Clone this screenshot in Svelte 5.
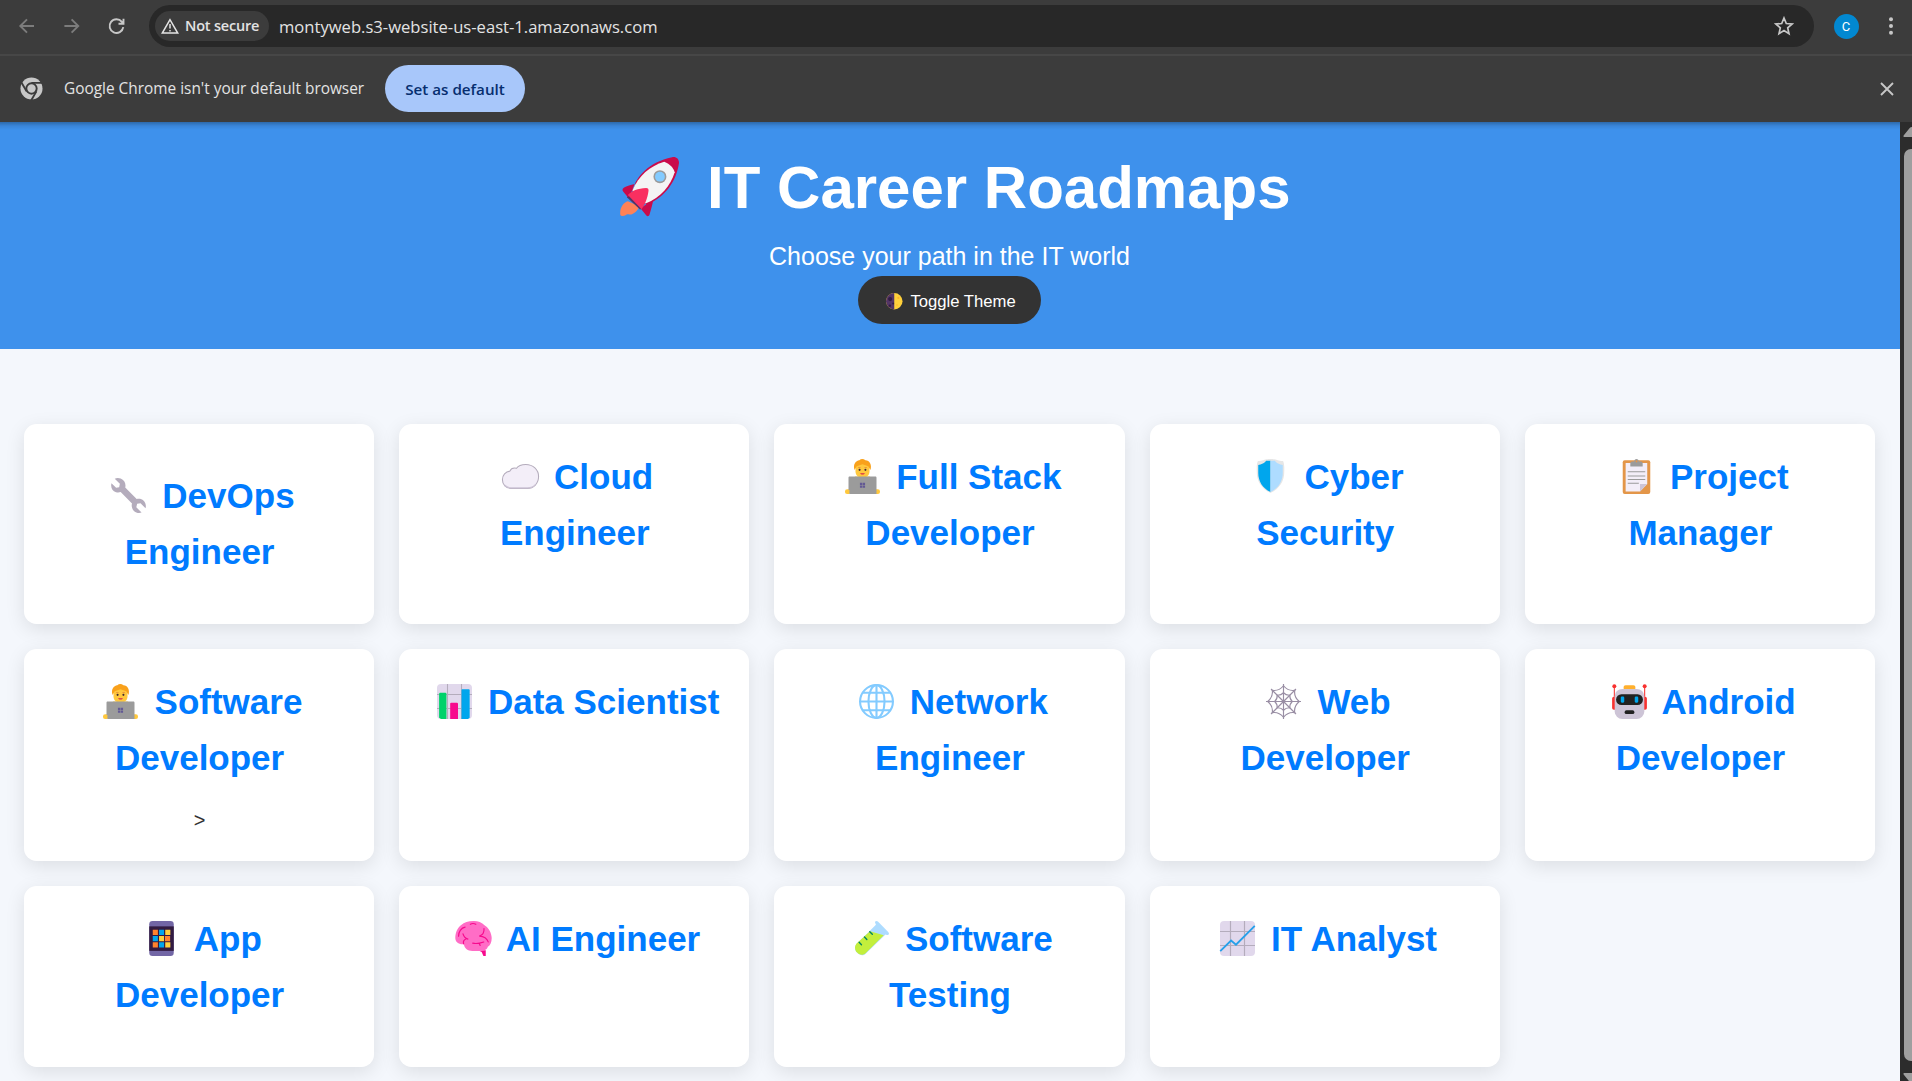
<script>
  const cards = [
    { icon: 'wrench', title: 'DevOps Engineer', offset: true },
    { icon: 'cloud', title: 'Cloud Engineer' },
    { icon: 'coder', title: 'Full Stack Developer' },
    { icon: 'shield', title: 'Cyber Security' },
    { icon: 'clipboard', title: 'Project Manager' },
    { icon: 'coder', title: 'Software Developer', note: '>' },
    { icon: 'bars', title: 'Data Scientist' },
    { icon: 'globe', title: 'Network Engineer' },
    { icon: 'web', title: 'Web Developer' },
    { icon: 'robot', title: 'Android Developer' },
    { icon: 'phone', title: 'App Developer' },
    { icon: 'brain', title: 'AI Engineer' },
    { icon: 'tube', title: 'Software Testing' },
    { icon: 'chart', title: 'IT Analyst' }
  ];
</script>

{#snippet glyph(name)}
  <svg class="glyph" viewBox="0 0 30 30">
    {#if name === 'wrench'}
      <path fill="#b4acbc" d="M3.2.6 7.6 5 7 8 4.4 8.3.4 4.4C-.5 7.800 1 11.200 4.300 12.200c1.300.4 2.800.3 4-.1L18 21.800c-.9 3.200.7 6.500 3.700 7.700 1.500.6 3.100.6 4.500.1l-4.500-4.500.7-3 2.900-.5 4.300 4.300c1-3.400-.7-6.800-4-7.900-1.200-.4-2.500-.3-3.600 0L12.200 8.100C13 5 11.500 1.800 8.300.5 6.600-.1 4.800-.1 3.200.6Z" />
    {:else if name === 'cloud'}
      <path fill="#f3eef8" stroke="#b4acbc" stroke-width=".9" d="M7 25.200C2.500 25.200-.5 21.900-.5 17.700c0-4 2.700-6.900 6.400-7.300C6.800 8.300 9 7.400 11.600 8 13.200 5.600 16 4.700 19.500 4.700c6.200 0 11 4.500 11 10.300 0 5.900-4.300 10.200-9.500 10.200Z" />
      <path fill="none" stroke="#cdc4d6" stroke-width="1" d="M1.500 22.500c1.500 1.600 3.400 2.200 5.500 2.200h14c3 0 5.500-1.200 7-3" />
    {:else if name === 'coder'}
      <path fill="#ffc83d" d="M8.500 16v-1h13v1Z" />
      <path fill="#ffc83d" d="M9 7.500C9 4.500 11.500 3 15 3s6 1.500 6 4.500v3.200c0 3.300-2.500 5.300-6 5.300s-6-2-6-5.300Z" />
      <path fill="#f9a11b" d="M8.200 9.500C6.600 4.500 9.200 1.300 12.300 1c1.400-1.300 3.500-1.300 5.200 0 3.600.1 5.800 4 4.300 8.500L20 6.200l-5-1.600-5 1.600Z" />
      <circle cx="12.500" cy="9.300" r=".9" fill="#402a32" /><circle cx="17.500" cy="9.300" r=".9" fill="#402a32" />
      <path fill="none" stroke="#e5883b" stroke-width=".7" d="M11.300 7.300h2M16.700 7.300h2" />
      <path fill="#d6244c" d="M13 12.200h4c-.3 1.500-3.700 1.500-4 0Z" />
      <rect x="0" y="26" width="5" height="4" rx="1.800" fill="#ffc83d" />
      <rect x="25" y="26" width="5" height="4" rx="1.800" fill="#ffc83d" />
      <path fill="#9b9b9b" d="M3 16c0-.6.400-1 1-1h22c.6 0 1 .4 1 1v14H3.800V26.500H3Z" />
      <path fill="#635994" d="M12.800 20.300h2v2h-2zM15.200 20.300h2v2h-2zM12.800 22.700h2v2h-2zM15.200 22.700h2v2h-2z" />
    {:else if name === 'shield'}
      <path fill="#e6e6e6" d="M15 0c1.300 0 2 .1 3.300.2 2 .2 3.500 1.400 7.300 1.500.700 0 1.200 4.300 1.200 5V11c0 8-4 14.500-11.800 18.200C7.200 25.500 3.200 19 3.200 11V6.700c0-.7.500-5 1.200-5C8.200 1.600 9.700.4 11.700.2 13 .1 13.700 0 15 0Z" />
      <path fill="#00a6ed" d="M15 1.500h-3.800C10.300 3.600 7 4.500 4.500 5.200V12c0 7 3.600 13 10.500 16.300Z" />
      <path fill="#aedcff" d="M15 1.500h3.800c.9 2.100 4.200 3 6.700 3.700V12c0 7-3.600 13-10.500 16.300Z" />
    {:else if name === 'clipboard'}
      <rect x="3.200" y="1" width="23.600" height="29" rx="1.700" fill="#e39649" />
      <path fill="#f3eef8" d="M5.700 3.500h18.500v18L18 27.900H5.700Z" />
      <path fill="#cdc4d6" d="M18 21.500h6.200L18 27.900Z" />
      <path fill="#9b9b9b" d="M9.700 6.500V3.800c0-1 .7-1.700 1.700-1.700H13C13.300.6 14 0 15 0s1.700.6 2 2.100h1.600c1 0 1.700.7 1.700 1.700v2.700Z" />
      <circle cx="15" cy="2" r=".9" fill="#e39649" />
      <path stroke="#9b9b9b" stroke-width=".9" d="M7.500 11h15M7.500 14.500h15M7.500 17.500h15M7.500 20.700H17" />
    {:else if name === 'bars'}
      <rect width="30" height="30" rx="3.500" fill="#e1d8ec" />
      <path stroke="#b4acbc" stroke-width=".9" d="M9 0v30M21 0v30M0 9h30M0 21h30" />
      <path fill="#00d26a" d="M1.800 8.500c0-.6.300-.9.900-.9h4.500c.6 0 .9.300.9.900V30H3.500l-1.700-1Z" />
      <path fill="#f70a8d" d="M11.300 17c0-.6.300-.9.900-.9h4.900c.6 0 .9.300.9.900v13h-6.700Z" />
      <path fill="#00a6ed" d="M21 5.500c0-.6.300-1 .9-1h5.200c.6 0 .9.400.9 1V29l-1.500 1H21Z" />
    {:else if name === 'globe'}
      <g fill="none" stroke="#83cbff" stroke-width="1.800">
        <circle cx="15" cy="15" r="14.100" /><ellipse cx="15" cy="15" rx="6.900" ry="14" />
        <path d="M15 1v28M1 15h28M3.300 7.500h23.400M3.300 22.500h23.400" />
      </g>
    {:else if name === 'web'}
      <g fill="none" stroke="#998ea4" stroke-width="1">
        <path d="M15 0v30M0 15h30M4.300 4.300l21.400 21.400M25.700 4.300 4.300 25.700" />
        <path d="M15 1.500q4 4.800 9.700 3.900Q23.700 11 28.500 15q-4.800 4-3.900 9.600Q19 23.700 15 28.500q-4-4.800-9.600-3.900Q6.300 19 1.500 15q4.800-4 3.900-9.600Q11 6.300 15 1.500Z" />
        <path d="M15 7.500q2.200 2.300 5.400 2.100-.2 3.200 2.100 5.400-2.300 2.200-2.100 5.400-3.200-.2-5.400 2.100-2.200-2.300-5.400-2.100.2-3.200-2.100-5.400 2.300-2.200 2.100-5.400 3.200.2 5.400-2.100Z" />
      </g>
    {:else if name === 'robot'}
      <path stroke="#f8312f" stroke-width=".9" d="M2 2v12M28 2v12" />
      <circle cx="2" cy="2" r="1.700" fill="#f8312f" /><circle cx="28" cy="2" r="1.700" fill="#f8312f" />
      <rect x=".1" y="11" width="5" height="11" rx="1.500" fill="#f8312f" /><rect x="24.900" y="11" width="5" height="11" rx="1.500" fill="#f8312f" />
      <path fill="#ffb02e" d="M10 4.500V2.700c0-1 .6-1.600 1.600-1.600h6.800c1 0 1.600.6 1.600 1.600v1.800Z" />
      <rect x="2.300" y="4.200" width="25.400" height="25.800" rx="6.500" fill="#cdc4d6" />
      <rect x="3.500" y="8.700" width="23" height="9.300" rx="4.600" fill="#212121" />
      <rect x="7.500" y="10.800" width="3" height="5.200" rx="1" fill="#00a6ed" /><rect x="19.500" y="10.800" width="3" height="5.200" rx="1" fill="#00a6ed" />
      <rect x="10.800" y="22.500" width="8.400" height="3.300" rx="1.600" fill="#212121" />
    {:else if name === 'phone'}
      <rect x="4.500" y="0" width="21" height="30" rx="2.800" fill="#7266a5" />
      <rect x="4.500" y="4.600" width="21" height="21" fill="#321b41" />
      <path fill="#ff822d" d="M7.500 7.500h4.400V12H7.500zM18 12.900h4.400v4.400H18zM7.500 18.300h4.400v4.500H7.500z" />
      <path fill="#00a6ed" d="M12.900 7.500h4.300V12h-4.300zM7.500 12.900h4.400v4.400H7.500zM12.900 18.300h4.300v4.500h-4.300z" />
      <path fill="#ffd03b" d="M18.200 7.500h4.400V12h-4.400zM12.900 12.900h4.300v4.400h-4.300zM18.200 18.300h4.400v4.500h-4.400z" />
    {:else if name === 'brain'}
      <path fill="#f70a8d" d="m19 25 3 1.500 1.500 3.500h2v-5Z" />
      <path fill="#ff6dc6" d="M5.600 20C2 20-.6 17.800-.6 14.600-.6 10 1.500 5.500 4.500 3.500 7 1 10.500 0 15 0c3.500-.1 7 1 9.700 3.800 3.400 2 5.800 6.700 5.900 10.700 0 3.600-1.300 6.500-3.300 7.600-1 3-3.800 3.600-6.600 3.600H14c-4 0-6.600-2-7.200-5.500Z" />
      <path fill="none" stroke="#f70a8d" stroke-width="1" stroke-linecap="round" d="M12.300 2.800c1.500-.9 3-.9 4.700 0M7.800 5.200C4.500 5.700 2 9.500 2.200 13M6 11c.5 2 1.600 3.500 4.200 4.500M6.500 19.500c-.6-2 .6-3.700 3-4.500M24 6.500c.3 3.500-.9 5.400-4 6.400 4.500.2 6.500 1.700 7.600 5M14.300 19c2.800.6 6 .2 9.500-1M20 19.300l.7 1.700" />
    {:else if name === 'tube'}
      <path fill="#aedcff" d="M18.200 1.800c-.8-1.600 1.200-2.400 2.300-1.300l9 9.200c1.100 1.200.2 2.900-1.300 2.200l-1.200-.3L10 28c-4.600 4.200-12-3-8-8L18.800 3.300Z" />
      <path fill="#c3ef3c" d="m13.700 8.800 11.800 3.400L9.900 27.700C5.400 31.800-2 25 2 19.500Z" />
      <path stroke="#008463" stroke-width="1.200" stroke-linecap="round" d="m4.400 18.300 2 2M9 13.800l2 2M13.500 9.200l2.200 2.200" />
    {:else if name === 'chart'}
      <rect width="30" height="30" rx="3.500" fill="#e1d8ec" />
      <path stroke="#b4acbc" stroke-width="1" d="M9 0v30M21 0v30M0 9h30M0 21h30" />
      <path fill="none" stroke="#26a0ea" stroke-width="1.600" d="m.2 25.800 9.300-9.100 4.200 3.600L29.800 4.200" />
    {:else if name === 'moon'}
      <circle cx="15" cy="15" r="15" fill="#ffd03b" />
      <path fill="#533566" d="M15 0a15 15 0 0 0 0 30Z" />
      <circle cx="7.500" cy="11" r="3.800" fill="#321b41" /><circle cx="7" cy="23" r="2.200" fill="#321b41" /><circle cx="13" cy="19" r="1.800" fill="#321b41" />
      <circle cx="22.500" cy="9" r="2" fill="#ffb02e" /><circle cx="20" cy="22" r="1.400" fill="#ffb02e" />
    {:else if name === 'rocket'}
      <path fill="#ff8257" d="M4 22.500c-2 .5-4 3-3.900 5.900C0 29.500.2 30 1.200 30c1.500 0 2-.8 2.700-.9.700-.1.800.4 1.900.1 1.500-.5 3.500-2.300 4-4.200Z" />
      <path fill="#533566" d="m3.500 20.500 6.800 6.300 1.500-2.600-6.500-6.400Z" />
      <path fill="#ca0b4a" d="M8.300 13.500c-3.700 1-5 1.300-6.500 2.300-.7.400-.6 1.300-.2 1.800l2.500 3ZM17 21.800c-.7 3-1.300 5.400-2 7.600-.3.800-1.100.9-1.700.2l-2.900-3.500ZM6.200 17.200C8.500 9.500 14.500 2.800 26.500.1 28.700-.2 30 1 30 3c-1.300 9-6.700 17.300-16.500 21.300Z" />
      <path fill="#f4f4f4" d="M22.500 2.400c3 1.200 4.600 3 5.300 5.300C25.700 14.500 20.800 20.500 13 23.700L6.300 17C9.500 9.500 15.300 4.500 22.500 2.400Z" />
      <circle cx="20.300" cy="10" r="3.300" fill="#9b9b9b" /><circle cx="20.300" cy="10" r="2.500" fill="#83cbff" />
      <path fill="#f92f60" d="M4 19.300c2-2 5-3.300 9.300-3.500 1 0 1.300.7 1.200 1.400-.5 4.200-2 7.200-3.500 9.400Z" />
    {/if}
  </svg>
{/snippet}

<div class="window">
  <div class="toolbar">
    <svg class="nav dim" viewBox="0 0 20 20"><path d="M17 10H3.500M10 3.300 3.300 10l6.700 6.700" /></svg>
    <svg class="nav dim" viewBox="0 0 20 20"><path d="M2.400 10h13.700M9.600 3.300l6.700 6.700-6.700 6.700" /></svg>
    <svg class="nav" viewBox="0 0 20 20"><path d="M16.300 11.200a6.900 6.900 0 1 1-1.400-5.400l1.500 1.500M16.500 2.800v5h-5" /></svg>
    <div class="omnibox">
      <div class="chip">
        <svg viewBox="0 0 18 16"><path d="M9 1.700 1.300 15h15.400Z" /><path d="M9 6v4.500M9 12v1.500" /></svg>
        <span>Not secure</span>
      </div>
      <span class="url">montyweb.s3-website-us-east-1.amazonaws.com</span>
      <svg class="star" viewBox="0 0 20 20"><path d="m10 2 2.300 5.500 5.800.5-4.400 3.900 1.300 5.800-5-3.100-5 3.100 1.300-5.800L1.900 8l5.800-.5Z" /></svg>
    </div>
    <div class="avatar">C</div>
    <svg class="kebab" viewBox="0 0 6 20"><circle cx="3" cy="3.200" r="2" /><circle cx="3" cy="10" r="2" /><circle cx="3" cy="16.800" r="2" /></svg>
  </div>

  <div class="infobar">
    <svg class="chrome" viewBox="0 0 24 24">
      <circle cx="12" cy="12" r="11.500" fill="#c7c7c7" />
      <path fill="none" stroke="#3c3c3c" stroke-width="2" d="M12 6.100h12M17.100 15l-6 10.400M6.900 15 .9 4.600" />
      <circle cx="12" cy="12" r="5.400" fill="#c7c7c7" stroke="#3c3c3c" stroke-width="2" />
    </svg>
    <span class="message">Google Chrome isn't your default browser</span>
    <button class="default">Set as default</button>
    <svg class="close" viewBox="0 0 14 14"><path d="m1 1 12 12M13 1 1 13" /></svg>
  </div>

  <div class="viewport">
    <div class="page">
      <header>
        <h1><span class="emoji">{@render glyph('rocket')}</span> IT Career Roadmaps</h1>
        <p>Choose your path in the IT world</p>
        <button class="theme"><span class="emoji">{@render glyph('moon')}</span> Toggle Theme</button>
      </header>
      <main>
        {#each cards as card}
          <article class:offset={card.offset}>
            <h2><span class="emoji">{@render glyph(card.icon)}</span> {card.title}</h2>
            {#if card.note}<div>{card.note}</div>{/if}
          </article>
        {/each}
      </main>
    </div>
    <div class="scrollbar">
      <svg viewBox="0 0 13 10"><path d="M1 10h12V0H9Q7.500 0 6.500 1.300L.8 8.300Q0 9.700 1 10Z" /></svg>
      <div class="thumb"></div>
      <svg viewBox="0 0 13 10"><path d="M1 0h12v10H9Q7.500 10 6.500 8.700L.8 1.700Q0 .3 1 0Z" /></svg>
    </div>
  </div>
</div>

<style>
  :global(body) { margin: 0; overflow: hidden; }
  .window {
    width: 1912px; height: 1081px; overflow: hidden;
    display: flex; flex-direction: column;
    font-family: "Open Sans", "Noto Sans", sans-serif;
    background: #3c3c3c;
  }
  .window * { box-sizing: border-box; }
  svg { display: block; flex: none; }
  button { border: 0; margin: 0; }

  .toolbar {
    flex: none; height: 56px; padding: 5px 18px 7px 17px;
    display: flex; align-items: center;
    border-bottom: 2px solid #474747;
    color: #c7c7c7;
  }
  .nav { width: 20px; height: 20px; margin-right: 25px; fill: none; stroke: currentColor; stroke-width: 1.9; }
  .nav.dim { color: #7c7c7c; }
  .omnibox {
    width: 1665px; height: 42px; padding: 0 20px 0 6px; margin-left: -3px;
    display: flex; align-items: center;
    border-radius: 21px; background: #282828;
  }
  .chip {
    width: 114px; height: 30px; padding: 0 0 2px 6px; gap: 6px;
    display: flex; align-items: center;
    border-radius: 15px; background: #3c3c3c; color: #e3e3e3;
    font-size: 14.500px; font-weight: 600; white-space: nowrap; letter-spacing: -.2px;
  }
  .chip svg { width: 18px; height: 16px; margin-top: 2px; fill: none; stroke: currentColor; stroke-width: 1.500; }
  .url { flex: 1; margin-left: 10px; font-size: 16.600px; color: #e3e3e3; white-space: nowrap; }
  .star { width: 20px; height: 20px; fill: none; stroke: #c7c7c7; stroke-width: 1.700; }
  .avatar {
    width: 25px; height: 25px; margin-left: 20px;
    border-radius: 50%; background: #0288d1; color: #fff;
    font: 13px/25px Roboto, sans-serif; text-align: center;
  }
  .kebab { width: 6px; height: 20px; margin-left: 29.500px; fill: #c7c7c7; }

  .infobar { flex: none; height: 66px; padding: 0 18.500px 1px 20px; display: flex; align-items: center; }
  .chrome { width: 23px; height: 23px; }
  .message { width: 321px; margin-left: 21px; font-size: 15.400px; color: #e3e3e3; white-space: nowrap; }
  .default {
    width: 140px; height: 47px; padding: 0; border-radius: 23.500px;
    background: #a8c7fa; color: #062e6f;
    font: 600 15.200px "Open Sans", sans-serif; white-space: nowrap;
  }
  .close { width: 14px; height: 14px; margin-left: auto; fill: none; stroke: #c7c7c7; stroke-width: 1.900; }

  .viewport { flex: 1; min-height: 0; display: flex; }
  .page { width: 1900px; background: #f4f7fc; color: #333; font-family: "Liberation Sans", Arial, sans-serif; }
  header {
    height: 227px; padding: 25px 25px 25px 24px;
    display: flex; flex-direction: column; align-items: center;
    background: linear-gradient(rgba(0, 0, 0, .28), rgba(0, 0, 0, .08) 4px, transparent 8px) #3e91ec;
    color: #fff;
  }
  h1 { margin: 0 0 8px; font-size: 60px; line-height: 81px; white-space: nowrap; }
  header p { margin: 0; font-size: 25px; line-height: 40px; }
  .theme {
    height: 48px; padding: 3px 25px 0; border-radius: 24px;
    background: #333; color: #fff;
    font: 16.667px "Liberation Sans", Arial, sans-serif; white-space: nowrap;
  }
  .emoji { display: inline-flex; justify-content: center; width: 48px; height: 35px; vertical-align: -5px; }
  .glyph { width: 35px; height: 35px; overflow: visible; }
  h1 .emoji { width: 82px; height: 59px; vertical-align: -8px; }
  h1 .glyph { width: 59px; height: 59px; }
  .theme .emoji { width: 22.800px; height: 16.500px; vertical-align: -2.500px; }
  .theme .glyph { width: 16.500px; height: 16.500px; }

  main {
    padding: 75px 25px 0 24px;
    display: grid; grid-template-columns: repeat(5, 1fr); gap: 25px;
  }
  article {
    padding: 25px 24.500px 25px 25.500px; border-radius: 12.500px; background: #fff;
    box-shadow: 0 5px 18.750px rgba(0, 0, 0, .1);
    text-align: center; font-size: 20px; line-height: 32px;
  }
  h2 { margin: 0 0 18.750px; font-size: 35px; line-height: 56px; color: #007bff; }
  article.offset h2 { margin-top: 18.750px; }

  .scrollbar {
    width: 12px; overflow: hidden; padding: 5px 0 0 3px;
    display: flex; flex-direction: column;
    background: #2c2c2c;
  }
  .scrollbar svg { width: 13px; height: 10px; fill: #9f9f9f; }
  .thumb { flex: none; width: 14px; height: 912px; margin: 12px 0 12px 1px; border-radius: 7px; background: #9f9f9f; }
</style>
